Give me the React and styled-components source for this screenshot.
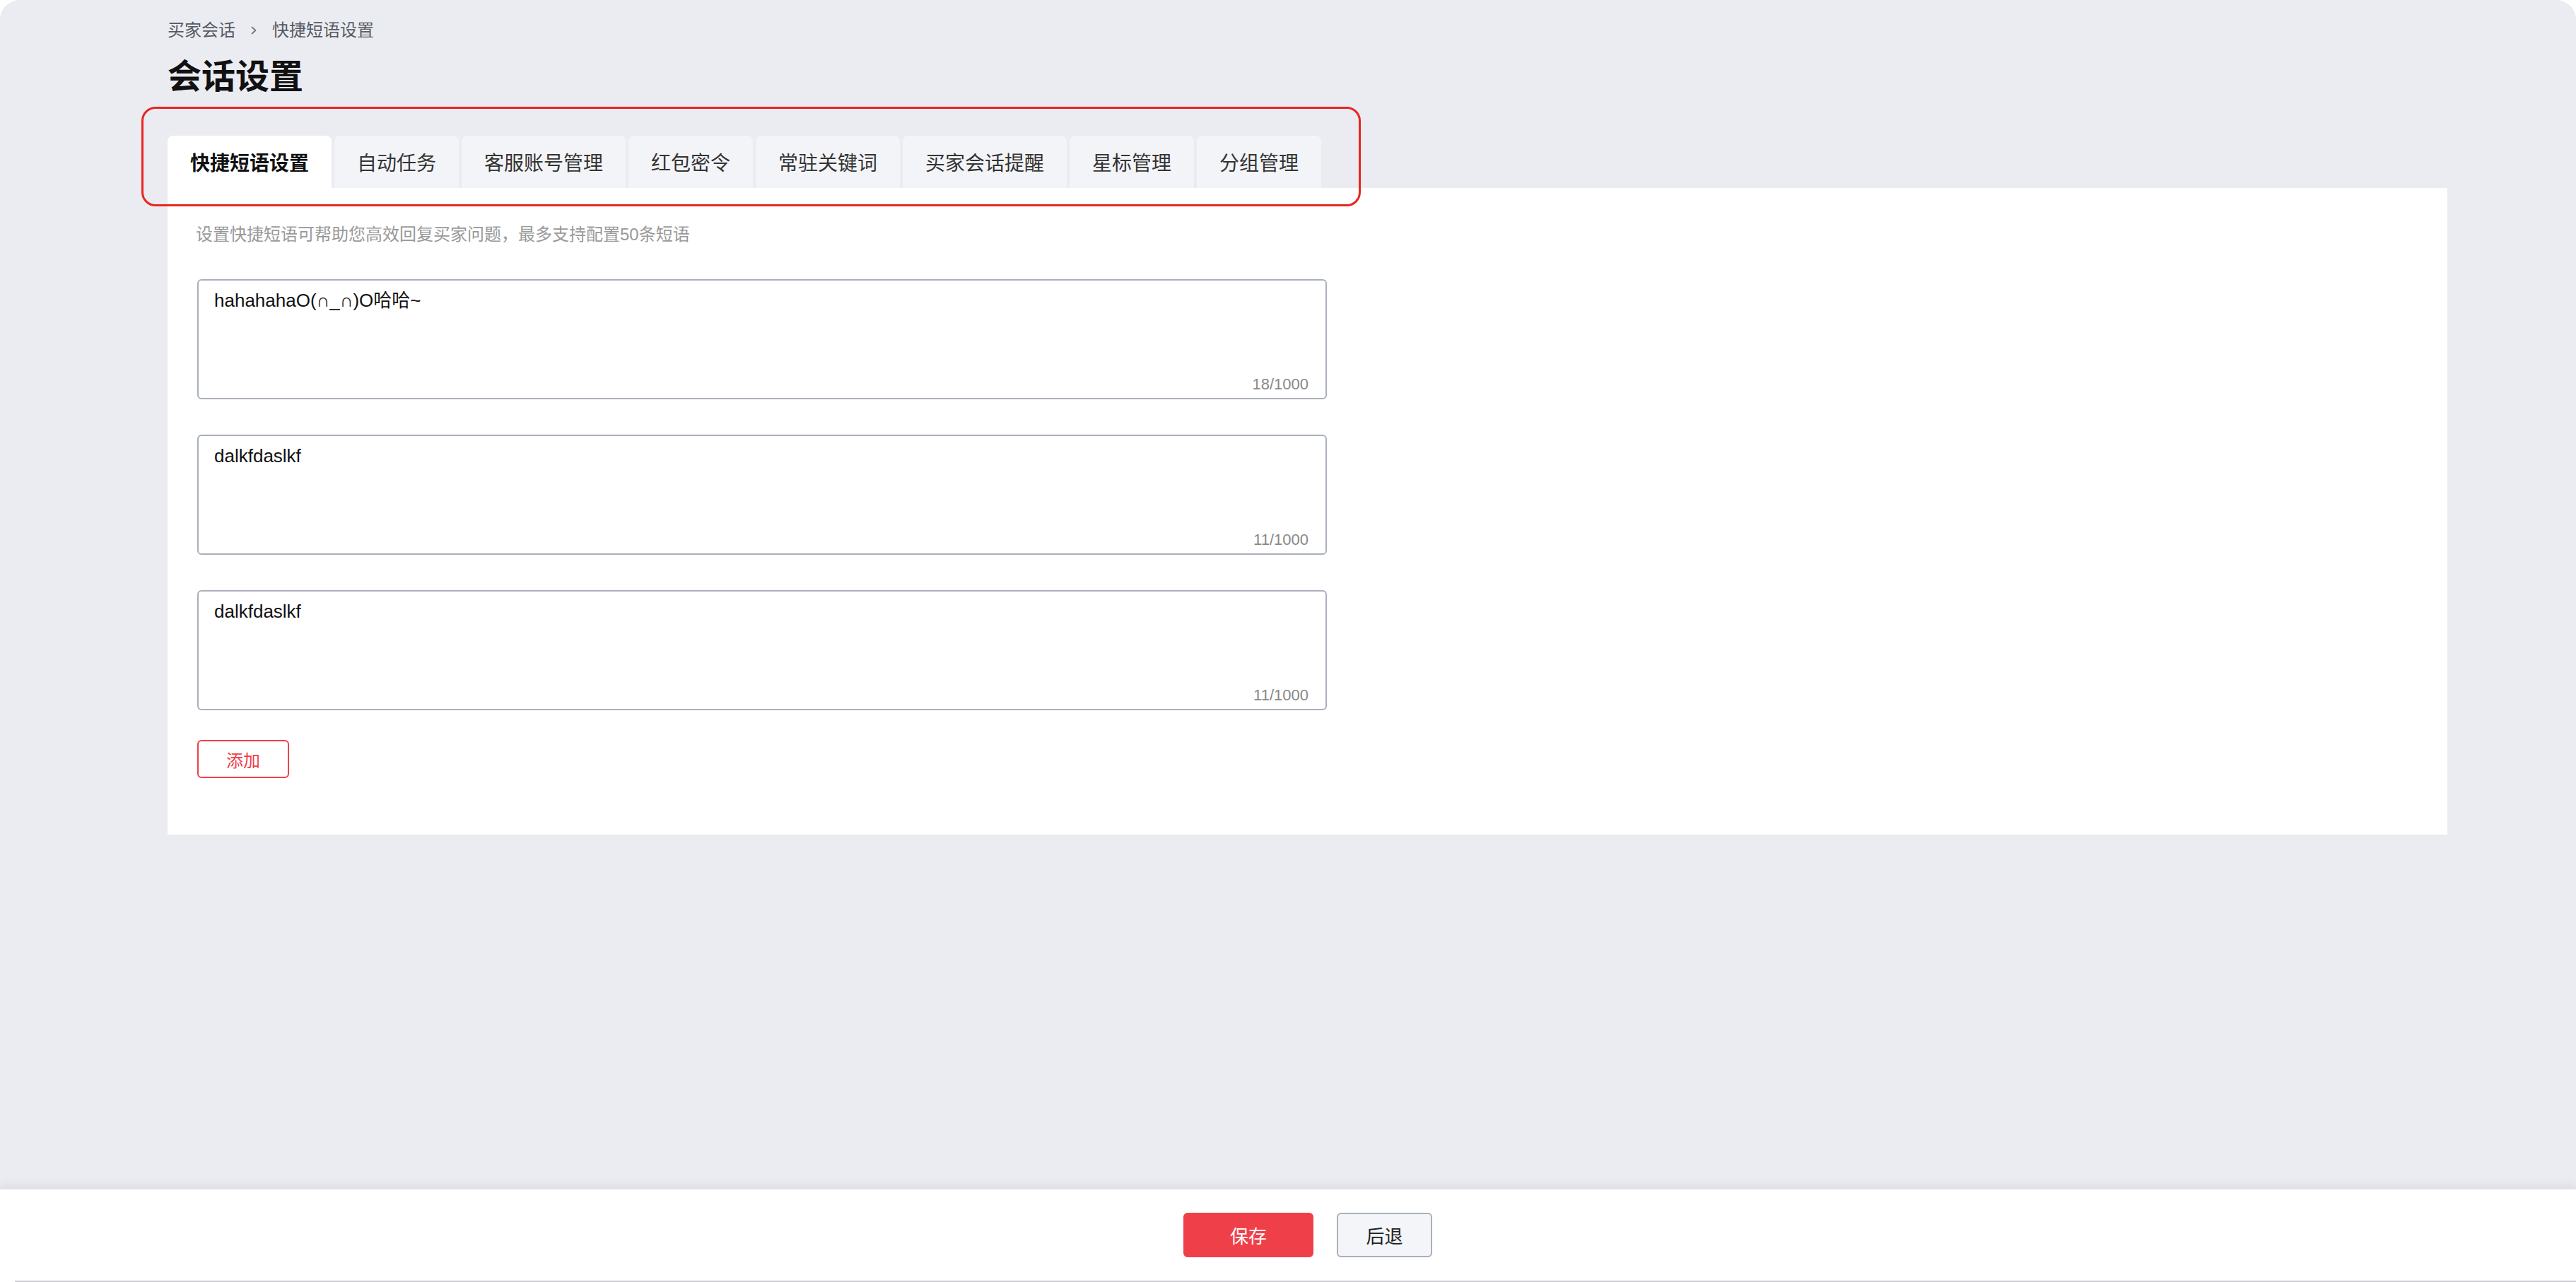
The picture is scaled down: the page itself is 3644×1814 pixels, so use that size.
import React from 'react';
import styled, { createGlobalStyle } from 'styled-components';

const GlobalStyle = createGlobalStyle`
	html, body {
		margin: 0;
		padding: 0;
		background: #ffffff;
	}
	body {
		font-family: "Liberation Sans", "Noto Sans CJK SC", sans-serif;
		color: #111;
	}
	* {
		box-sizing: border-box;
	}
`;

const tabs = [
	{ label: '快捷短语设置', active: true },
	{ label: '自动任务' },
	{ label: '客服账号管理' },
	{ label: '红包密令' },
	{ label: '常驻关键词' },
	{ label: '买家会话提醒' },
	{ label: '星标管理' },
	{ label: '分组管理' }
];

const phrases = [
	{ text: 'hahahahaO(∩_∩)O哈哈~', count: 18 },
	{ text: 'dalkfdaslkf', count: 11 },
	{ text: 'dalkfdaslkf', count: 11 }
];

const Page = styled.div`
	width: 3644px;
	height: 1814px;
	display: flex;
	flex-direction: column;
`;

const Main = styled.main`
	flex: 1;
	background: #ebecf1;
	border-radius: 28px 28px 0 0;
	padding: 28px 182px 0 237px;
`;

const Breadcrumb = styled.nav`
	display: flex;
	align-items: center;
	gap: 20px;
	height: 30px;
	font-size: 24px;
	color: #555a63;
`;

const Crumb = styled.span`
	line-height: 30px;
`;

const Title = styled.h1`
	margin: 22px 0 0;
	font-size: 48px;
	line-height: 58px;
	font-weight: 700;
	color: #111;
`;

const TabBar = styled.div`
	position: relative;
	display: flex;
	align-items: flex-end;
	gap: 4px;
	margin-top: 54px;
`;

const Tab = styled.div`
	height: 74px;
	padding: 0 32px;
	display: flex;
	align-items: center;
	border-radius: 8px 8px 0 0;
	font-size: 28px;
	white-space: nowrap;
	background: ${({ active }) => (active ? '#ffffff' : '#f3f4f8')};
	color: ${({ active }) => (active ? '#111' : '#333')};
	font-weight: ${({ active }) => (active ? 700 : 400)};
`;

const Highlight = styled.div`
	position: absolute;
	left: -37px;
	top: -41px;
	width: 1725px;
	height: 141px;
	border: 3px solid #e8261f;
	border-radius: 20px;
	pointer-events: none;
`;

const Panel = styled.section`
	background: #ffffff;
	padding: 49px 40px 80px 42px;
`;

const Hint = styled.p`
	margin: 0 0 46px -2px;
	font-size: 24px;
	line-height: 34px;
	color: #999;
`;

const PhraseList = styled.div`
	display: flex;
	flex-direction: column;
	gap: 50px;
`;

const PhraseBox = styled.div`
	width: 1598px;
	height: 170px;
	border: 2px solid #a9b0bb;
	border-radius: 6px;
	padding: 10px 24px 4px 22px;
	display: flex;
	flex-direction: column;
	justify-content: space-between;
`;

const PhraseText = styled.div`
	font-family: "Liberation Sans", "DejaVu Sans", "Noto Sans CJK SC", sans-serif;
	font-size: 26px;
	line-height: 36px;
	color: #111;
`;

const Counter = styled.div`
	align-self: flex-end;
	font-size: 22px;
	line-height: 30px;
	color: #888;
`;

const AddButton = styled.button`
	margin-top: 42px;
	width: 130px;
	height: 54px;
	border: 2px solid #ef404a;
	border-radius: 6px;
	background: #ffffff;
	color: #ef404a;
	font-family: "Noto Sans CJK SC", sans-serif;
	font-size: 24px;
	padding: 0;
`;

const Footer = styled.footer`
	height: 131px;
	background: #ffffff;
	box-shadow: 0 -4px 14px rgba(40, 45, 70, 0.09);
	display: flex;
	flex-direction: column;
	position: relative;
`;

const Actions = styled.div`
	flex: 1;
	display: flex;
	justify-content: center;
	align-items: center;
	gap: 33px;
	padding-left: 56px;
`;

const Button = styled.button`
	height: 63px;
	width: ${({ primary }) => (primary ? '184px' : '135px')};
	border-radius: 6px;
	font-family: "Noto Sans CJK SC", sans-serif;
	font-size: 26px;
	padding: 0;
	border: 2px solid ${({ primary }) => (primary ? '#ef404a' : '#a9b0bb')};
	background: ${({ primary }) => (primary ? '#ef404a' : '#f4f5f9')};
	color: ${({ primary }) => (primary ? '#ffffff' : '#222')};
`;

const BottomLine = styled.div`
	height: 2px;
	margin-left: 21px;
	background: #cfcfd3;
`;

const Chevron = () => (
	<svg width="12" height="14" viewBox="0 0 12 14" fill="none">
		<path d="M3.5 2.5 L8.5 7 L3.5 11.5" stroke="#777" strokeWidth="1.8" strokeLinecap="round" strokeLinejoin="round" />
	</svg>
);

const App = () => (
	<Page>
		<GlobalStyle />
		<Main>
			<Breadcrumb>
				<Crumb>买家会话</Crumb>
				<Chevron />
				<Crumb>快捷短语设置</Crumb>
			</Breadcrumb>
			<Title>会话设置</Title>
			<TabBar>
				{tabs.map((t) => (
					<Tab key={t.label} active={t.active}>
						{t.label}
					</Tab>
				))}
				<Highlight />
			</TabBar>
			<Panel>
				<Hint>设置快捷短语可帮助您高效回复买家问题，最多支持配置50条短语</Hint>
				<PhraseList>
					{phrases.map((p, i) => (
						<PhraseBox key={i}>
							<PhraseText>{p.text}</PhraseText>
							<Counter>{p.count}/1000</Counter>
						</PhraseBox>
					))}
				</PhraseList>
				<AddButton>添加</AddButton>
			</Panel>
		</Main>
		<Footer>
			<Actions>
				<Button primary>保存</Button>
				<Button>后退</Button>
			</Actions>
			<BottomLine />
		</Footer>
	</Page>
);

export default App;
